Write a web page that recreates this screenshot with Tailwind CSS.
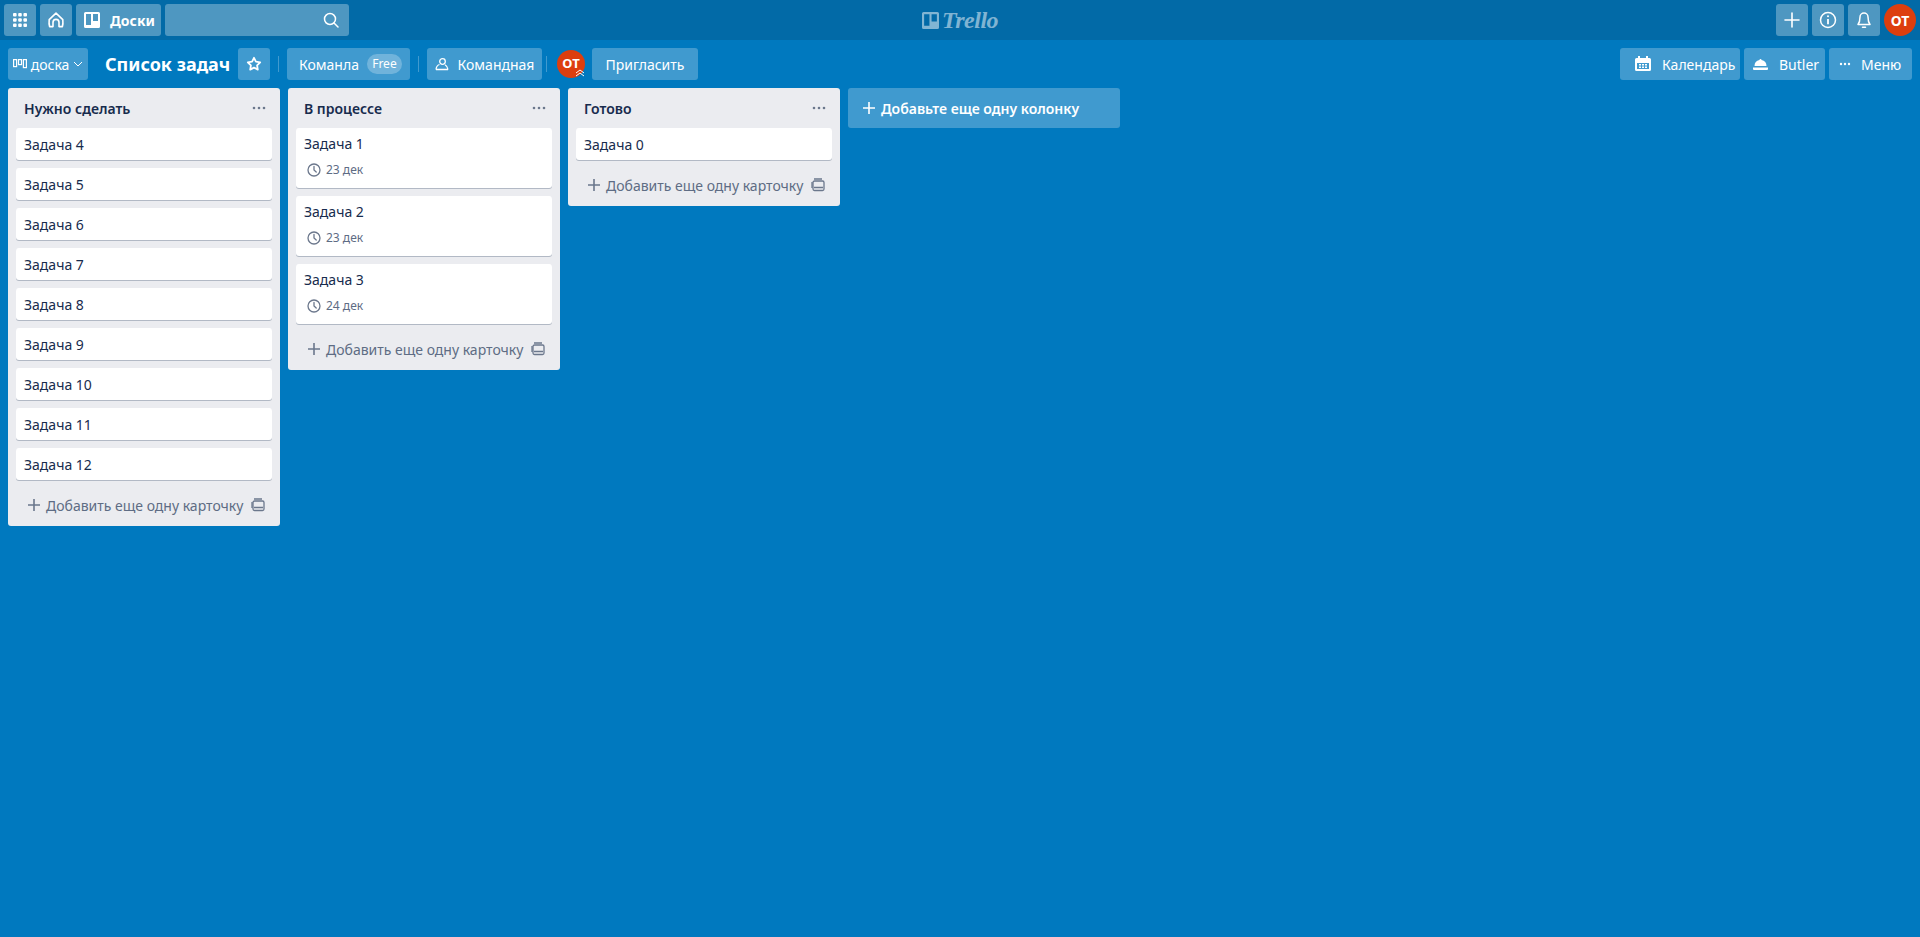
<!DOCTYPE html>
<html lang="ru">
<head>
    <meta charset="UTF-8">
    <meta name="viewport" content="width=device-width, initial-scale=1.0">
    <title>Список задач</title>
    <script src="https://cdn.jsdelivr.net/npm/@tailwindcss/browser@4"></script>
</head>
<body class="h-[937px] overflow-hidden bg-[#0079bf] font-['Noto_Sans','Open_Sans',sans-serif] text-[14px] text-white">
    <!-- Top header -->
    <header class="relative flex h-10 items-center justify-between bg-[#026aa7] px-1">
        <div class="flex items-center gap-1">
            <button class="flex h-8 w-8 items-center justify-center rounded-[3px] bg-white/30">
                <svg width="16" height="16" viewBox="0 0 16 16" fill="#fff"><rect x="1" y="1" width="3.6" height="3.6" rx="1"/><rect x="6.2" y="1" width="3.6" height="3.6" rx="1"/><rect x="11.4" y="1" width="3.6" height="3.6" rx="1"/><rect x="1" y="6.2" width="3.6" height="3.6" rx="1"/><rect x="6.2" y="6.2" width="3.6" height="3.6" rx="1"/><rect x="11.4" y="6.2" width="3.6" height="3.6" rx="1"/><rect x="1" y="11.4" width="3.6" height="3.6" rx="1"/><rect x="6.2" y="11.4" width="3.6" height="3.6" rx="1"/><rect x="11.4" y="11.4" width="3.6" height="3.6" rx="1"/></svg>
            </button>
            <button class="flex h-8 w-8 items-center justify-center rounded-[3px] bg-white/30">
                <svg width="18" height="18" viewBox="0 0 18 18" fill="none" stroke="#fff" stroke-width="1.6" stroke-linejoin="round"><path d="M2.2 8.6 9 2.2l6.8 6.4c.3 3 .2 5-.4 7H12v-4.2a3 3 0 0 0-6 0v4.2H2.6c-.6-2-.7-4-.4-7z"/></svg>
            </button>
            <button class="flex h-8 w-[85px] items-center rounded-[3px] bg-white/30 pl-2 font-bold">
                <svg width="16" height="16" viewBox="0 0 16 16" fill="#fff"><path fill-rule="evenodd" d="M1.5 0h13A1.5 1.5 0 0 1 16 1.5v13a1.5 1.5 0 0 1-1.500 1.500h-13A1.500 1.500 0 0 1 0 14.500v-13A1.500 1.500 0 0 1 1.500 0zM2 2v11h5V2H2zm7 0v7h5V2H9z"/></svg>
                <span class="ml-[10px] text-[14px]">Доски</span>
            </button>
            <div class="flex h-8 w-[184px] items-center justify-end rounded-[3px] bg-white/30 pr-[10px]">
                <svg width="16" height="16" viewBox="0 0 16 16" fill="none" stroke="#fff" stroke-width="1.500"><circle cx="7" cy="7" r="5.500"/><path d="m11 11 4 4" stroke-linecap="round"/></svg>
            </div>
        </div>
        <div class="absolute left-[922px] top-0 flex h-10 items-center gap-[3px] text-white/50">
            <svg width="17" height="17" viewBox="0 0 16 16" fill="currentColor"><path fill-rule="evenodd" d="M1.500 0h13A1.500 1.500 0 0 1 16 1.500v13a1.500 1.500 0 0 1-1.500 1.500h-13A1.500 1.500 0 0 1 0 14.500v-13A1.500 1.500 0 0 1 1.500 0zM2 2v11h5V2H2zm7 0v7h5V2H9z"/></svg>
            <span class="font-['Liberation_Serif',serif] text-[24px] font-bold italic leading-none tracking-[-0.5px]">Trello</span>
        </div>
        <div class="flex items-center gap-1">
            <button class="flex h-8 w-8 items-center justify-center rounded-[3px] bg-white/30">
                <svg width="16" height="16" viewBox="0 0 16 16" stroke="#fff" stroke-width="1.600" stroke-linecap="round"><path d="M8 1v14M1 8h14"/></svg>
            </button>
            <button class="flex h-8 w-8 items-center justify-center rounded-[3px] bg-white/30">
                <svg width="18" height="18" viewBox="0 0 18 18" fill="none" stroke="#fff" stroke-width="1.500"><circle cx="9" cy="9" r="7.500"/><path d="M9 8v5.200" stroke-width="1.800"/><circle cx="9" cy="5.300" r="1" fill="#fff" stroke="none"/></svg>
            </button>
            <button class="flex h-8 w-8 items-center justify-center rounded-[3px] bg-white/30">
                <svg width="16" height="18" viewBox="0 0 16 18" fill="none" stroke="#fff" stroke-width="1.500" stroke-linejoin="round"><path d="M8 2a4 4 0 0 0-4 4c0 4-.5 5.500-2 7.500h12c-1.500-2-2-3.500-2-7.500a4 4 0 0 0-4-4z"/><path d="M6.500 16.200h3" stroke-linecap="round"/></svg>
            </button>
            <div class="flex h-8 w-8 items-center justify-center rounded-full bg-[#dd3e0e] text-[14px] font-bold">ОТ</div>
        </div>
    </header>

    <!-- Board bar -->
    <div class="flex h-[48px] items-center justify-between pl-2 pr-2">
        <div class="flex items-center">
            <button class="flex h-8 w-20 items-center justify-center gap-1 rounded-[3px] bg-white/25">
                <svg width="14" height="10" viewBox="0 0 14 10" fill="none" stroke="#fff" stroke-width="1.200"><rect x=".6" y=".6" width="3" height="7"/><rect x="5.500" y=".6" width="3" height="5"/><rect x="10.400" y=".6" width="3" height="8"/></svg>
                <span>доска</span>
                <svg width="10" height="6" viewBox="0 0 10 6" fill="none" stroke="#fff" stroke-width="1"><path d="m1 1 4 4 4-4"/></svg>
            </button>
            <h1 class="ml-[17px] w-[133px] text-[18px] font-bold">Список задач</h1>
            <button class="flex h-8 w-8 items-center justify-center rounded-[3px] bg-white/25">
                <svg width="16" height="16" viewBox="0 0 16 16" fill="none" stroke="#fff" stroke-width="1.800" stroke-linejoin="round"><path d="m8 1.800 1.900 3.900 4.300.6-3.100 3 .7 4.300L8 11.600l-3.800 2 .7-4.300-3.100-3 4.300-.6z"/></svg>
            </button>
            <span class="mx-2 h-4 w-px bg-white/25"></span>
            <button class="flex h-8 w-[123px] items-center rounded-[3px] bg-white/25 pl-3">
                <span>Команла</span>
                <span class="ml-2 flex h-5 w-[35px] items-center justify-center rounded-full bg-white/25 text-[12px]">Free</span>
            </button>
            <span class="mx-2 h-4 w-px bg-white/25"></span>
            <button class="flex h-8 w-[115px] items-center justify-center gap-[9px] rounded-[3px] bg-white/25">
                <svg width="14" height="14" viewBox="0 0 14 14" fill="none" stroke="#fff" stroke-width="1.300"><circle cx="7.500" cy="4.500" r="2.800"/><path d="M1 12.500c.3-3 2-4.500 3.500-5m8.500 5c-.3-2.500-1.500-4-3-4.800M1 12.500h12"/></svg>
                <span>Командная</span>
            </button>
            <span class="mx-1 h-4 w-px bg-white/25"></span>
            <div class="relative ml-[6px] flex h-[28px] w-[28px] items-center justify-center rounded-full bg-[#dd3e0e] text-[13px] font-bold">
                ОТ
                <svg class="absolute bottom-0 right-0 rounded-sm" width="10" height="10" viewBox="0 0 10 10" fill="none" stroke="#fff" stroke-width="1"><path d="m1 5 4-3 4 3M1 8l4-3 4 3"/></svg>
            </div>
            <button class="ml-[7px] h-8 w-[106px] rounded-[3px] bg-white/25">Пригласить</button>
        </div>
        <div class="flex items-center gap-1">
            <button class="flex h-8 w-[120px] items-center rounded-[3px] bg-white/25 pl-[15px]">
                <svg width="16" height="16" viewBox="0 0 16 16" fill="#fff"><path fill-rule="evenodd" d="M3 0h2v2h6V0h2v2h1.500A1.500 1.500 0 0 1 16 3.500v10a1.500 1.500 0 0 1-1.500 1.500h-13A1.500 1.500 0 0 1 0 13.500v-10A1.500 1.500 0 0 1 1.500 2H3V0zM2 7v6h12V7H2zm2 1h2v1.500H4V8zm3 0h2v1.500H7V8zm3 0h2v1.500h-2V8zm-6 2.500h2V12H4v-1.500zm3 0h2V12H7v-1.500zm3 0h2V12h-2v-1.500z"/></svg>
                <span class="ml-[11px]">Календарь</span>
            </button>
            <button class="flex h-8 w-[81px] items-center rounded-[3px] bg-white/25 pl-[9px]">
                <svg width="15" height="13" viewBox="0 0 15 13" fill="#fff"><path d="M7.500 1a1 1 0 0 1 1 1.100A6 6 0 0 1 13.500 8h-12a6 6 0 0 1 5-5.900A1 1 0 0 1 7.500 1zM0 9.500h15V11a1 1 0 0 1-1 1H1a1 1 0 0 1-1-1z"/></svg>
                <span class="ml-[11px]">Butler</span>
            </button>
            <button class="flex h-8 w-[83px] items-center rounded-[3px] bg-white/25 pl-[10px]">
                <svg width="12" height="4" viewBox="0 0 12 4" fill="#fff"><circle cx="2" cy="2" r="1.200"/><circle cx="6" cy="2" r="1.200"/><circle cx="10" cy="2" r="1.200"/></svg>
                <span class="ml-[10px]">Меню</span>
            </button>
        </div>
    </div>

    <!-- Board -->
    <main class="flex items-start gap-2 pl-2">
        <section class="w-[272px] rounded-[3px] bg-[#ebecf0] px-2">
            <div class="flex h-10 items-center justify-between pl-2 pr-[6px] font-semibold text-[#172b4d]"><span>Нужно сделать</span>
                <svg width="14" height="4" viewBox="0 0 14 4" fill="#6b778c"><circle cx="2" cy="2" r="1.300"/><circle cx="7" cy="2" r="1.300"/><circle cx="12" cy="2" r="1.300"/></svg></div>
            <div class="mb-2 flex h-8 items-center rounded-[3px] bg-white pl-2 text-[#172b4d] shadow-[0_1px_0_#091e4240]">Задача 4</div>
            <div class="mb-2 flex h-8 items-center rounded-[3px] bg-white pl-2 text-[#172b4d] shadow-[0_1px_0_#091e4240]">Задача 5</div>
            <div class="mb-2 flex h-8 items-center rounded-[3px] bg-white pl-2 text-[#172b4d] shadow-[0_1px_0_#091e4240]">Задача 6</div>
            <div class="mb-2 flex h-8 items-center rounded-[3px] bg-white pl-2 text-[#172b4d] shadow-[0_1px_0_#091e4240]">Задача 7</div>
            <div class="mb-2 flex h-8 items-center rounded-[3px] bg-white pl-2 text-[#172b4d] shadow-[0_1px_0_#091e4240]">Задача 8</div>
            <div class="mb-2 flex h-8 items-center rounded-[3px] bg-white pl-2 text-[#172b4d] shadow-[0_1px_0_#091e4240]">Задача 9</div>
            <div class="mb-2 flex h-8 items-center rounded-[3px] bg-white pl-2 text-[#172b4d] shadow-[0_1px_0_#091e4240]">Задача 10</div>
            <div class="mb-2 flex h-8 items-center rounded-[3px] bg-white pl-2 text-[#172b4d] shadow-[0_1px_0_#091e4240]">Задача 11</div>
            <div class="mb-2 flex h-8 items-center rounded-[3px] bg-white pl-2 text-[#172b4d] shadow-[0_1px_0_#091e4240]">Задача 12</div>
            <div class="flex h-[38px] items-center justify-between pb-1 pl-3 pr-[7px] text-[#5e6c84]">
                <span class="flex items-center gap-[6px]">
                    <svg width="12" height="12" viewBox="0 0 12 12" stroke="#6b778c" stroke-width="1.600"><path d="M6 0v12M0 6h12"/></svg>
                    Добавить еще одну карточку
                </span>
                <svg width="14" height="14" viewBox="0 0 14 14" fill="none" stroke="#6b778c" stroke-width="1.300"><rect x="2" y="3" width="11" height="9.500" rx="1.500"/><path d="M1 4v6M3 1h8M3 9.500h9" /></svg>
            </div>
        </section>

        <section class="w-[272px] rounded-[3px] bg-[#ebecf0] px-2">
            <div class="flex h-10 items-center justify-between pl-2 pr-[6px] font-semibold text-[#172b4d]"><span>В процессе</span>
                <svg width="14" height="4" viewBox="0 0 14 4" fill="#6b778c"><circle cx="2" cy="2" r="1.300"/><circle cx="7" cy="2" r="1.300"/><circle cx="12" cy="2" r="1.300"/></svg></div>
            <div class="mb-2 h-[60px] rounded-[3px] bg-white pl-2 pt-[5px] text-[#172b4d] shadow-[0_1px_0_#091e4240]">Задача 1
                <div class="mt-[9px] flex items-center gap-[5px] pl-[3px] text-[12px] leading-none text-[#5e6c84]"><svg width="14" height="14" viewBox="0 0 14 14" fill="none" stroke="#6b778c" stroke-width="1.300"><circle cx="7" cy="7" r="6"/><path d="M7 3.500V7l2.200 2" stroke-linecap="round"/></svg>23 дек</div></div>
            <div class="mb-2 h-[60px] rounded-[3px] bg-white pl-2 pt-[5px] text-[#172b4d] shadow-[0_1px_0_#091e4240]">Задача 2
                <div class="mt-[9px] flex items-center gap-[5px] pl-[3px] text-[12px] leading-none text-[#5e6c84]"><svg width="14" height="14" viewBox="0 0 14 14" fill="none" stroke="#6b778c" stroke-width="1.300"><circle cx="7" cy="7" r="6"/><path d="M7 3.500V7l2.200 2" stroke-linecap="round"/></svg>23 дек</div></div>
            <div class="mb-2 h-[60px] rounded-[3px] bg-white pl-2 pt-[5px] text-[#172b4d] shadow-[0_1px_0_#091e4240]">Задача 3
                <div class="mt-[9px] flex items-center gap-[5px] pl-[3px] text-[12px] leading-none text-[#5e6c84]"><svg width="14" height="14" viewBox="0 0 14 14" fill="none" stroke="#6b778c" stroke-width="1.300"><circle cx="7" cy="7" r="6"/><path d="M7 3.500V7l2.200 2" stroke-linecap="round"/></svg>24 дек</div></div>
            <div class="flex h-[38px] items-center justify-between pb-1 pl-3 pr-[7px] text-[#5e6c84]">
                <span class="flex items-center gap-[6px]">
                    <svg width="12" height="12" viewBox="0 0 12 12" stroke="#6b778c" stroke-width="1.600"><path d="M6 0v12M0 6h12"/></svg>
                    Добавить еще одну карточку
                </span>
                <svg width="14" height="14" viewBox="0 0 14 14" fill="none" stroke="#6b778c" stroke-width="1.300"><rect x="2" y="3" width="11" height="9.500" rx="1.500"/><path d="M1 4v6M3 1h8M3 9.500h9" /></svg>
            </div>
        </section>

        <section class="w-[272px] rounded-[3px] bg-[#ebecf0] px-2">
            <div class="flex h-10 items-center justify-between pl-2 pr-[6px] font-semibold text-[#172b4d]"><span>Готово</span>
                <svg width="14" height="4" viewBox="0 0 14 4" fill="#6b778c"><circle cx="2" cy="2" r="1.300"/><circle cx="7" cy="2" r="1.300"/><circle cx="12" cy="2" r="1.300"/></svg></div>
            <div class="mb-2 flex h-8 items-center rounded-[3px] bg-white pl-2 text-[#172b4d] shadow-[0_1px_0_#091e4240]">Задача 0</div>
            <div class="flex h-[38px] items-center justify-between pb-1 pl-3 pr-[7px] text-[#5e6c84]">
                <span class="flex items-center gap-[6px]">
                    <svg width="12" height="12" viewBox="0 0 12 12" stroke="#6b778c" stroke-width="1.600"><path d="M6 0v12M0 6h12"/></svg>
                    Добавить еще одну карточку
                </span>
                <svg width="14" height="14" viewBox="0 0 14 14" fill="none" stroke="#6b778c" stroke-width="1.300"><rect x="2" y="3" width="11" height="9.500" rx="1.500"/><path d="M1 4v6M3 1h8M3 9.500h9" /></svg>
            </div>
        </section>

        <button class="flex h-10 w-[272px] items-center gap-[6px] rounded-[3px] bg-white/25 pl-[15px] font-semibold">
            <svg width="12" height="12" viewBox="0 0 12 12" stroke="#fff" stroke-width="1.600"><path d="M6 0v12M0 6h12"/></svg>
            Добавьте еще одну колонку
        </button>
    </main>
</body>
</html>
